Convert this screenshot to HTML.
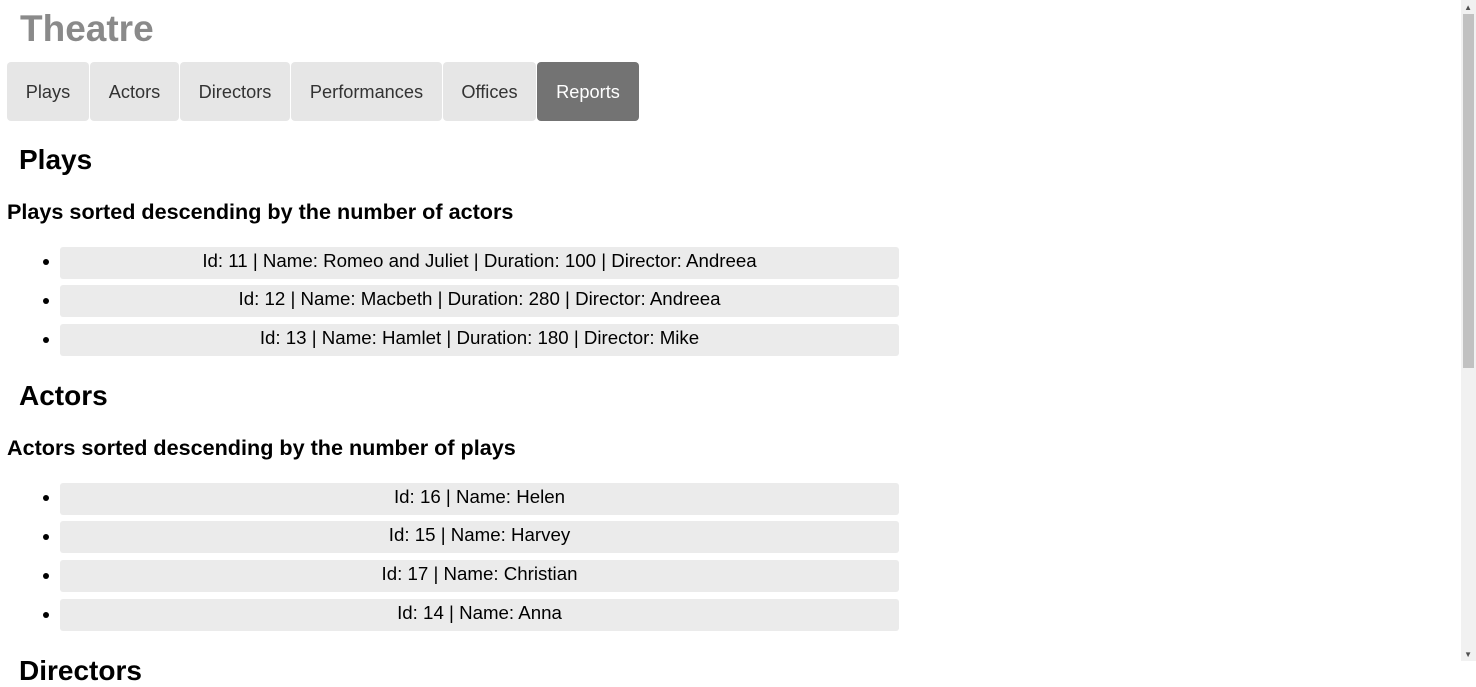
<!DOCTYPE html>
<html><head><style>
body{margin:0;width:1476px;height:661px;overflow:hidden;font-family:"Liberation Sans",Arial,sans-serif;background:#fff;position:relative}
.a{position:absolute;white-space:nowrap}
.t{left:20px;top:8px;font-size:37px;font-weight:bold;color:#8a8a8a}
.n{top:62px;height:59px;line-height:60px;background:#e6e6e6;border-radius:4px;font-size:18.2px;color:#333;text-align:center}
.r{background:#737373;color:#fff}
.h2{left:19px;font-size:28px;font-weight:bold;color:#000}
.h3{left:7px;font-size:21.6px;font-weight:bold;color:#000}
.li{left:60px;width:839px;height:32px;line-height:27px;background:#ebebeb;border-radius:3px;font-size:18.7px;text-align:center;color:#000}
.b{left:43px;width:6px;height:6px;border-radius:50%;background:#000}
.sb{right:0;top:0;width:15px;height:661px;background:#f1f1f1}
.th{right:2px;top:14px;width:11px;height:354px;background:#c1c1c1}
</style></head><body>
<div class="a t">Theatre</div>
<div class="a n" style="left:7px;width:82px">Plays</div>
<div class="a n" style="left:90px;width:89px">Actors</div>
<div class="a n" style="left:180px;width:110px">Directors</div>
<div class="a n" style="left:291px;width:151px">Performances</div>
<div class="a n" style="left:443px;width:93px">Offices</div>
<div class="a n r" style="left:537px;width:102px">Reports</div>

<div class="a h2" style="top:144px">Plays</div>
<div class="a h3" style="top:199px">Plays sorted descending by the number of actors</div>
<div class="a b" style="top:259px"></div><div class="a li" style="top:247px">Id: 11 | Name: Romeo and Juliet | Duration: 100 | Director: Andreea</div>
<div class="a b" style="top:298px"></div><div class="a li" style="top:285px">Id: 12 | Name: Macbeth | Duration: 280 | Director: Andreea</div>
<div class="a b" style="top:337px"></div><div class="a li" style="top:324px">Id: 13 | Name: Hamlet | Duration: 180 | Director: Mike</div>

<div class="a h2" style="top:380px">Actors</div>
<div class="a h3" style="top:435px">Actors sorted descending by the number of plays</div>
<div class="a b" style="top:495px"></div><div class="a li" style="top:483px">Id: 16 | Name: Helen</div>
<div class="a b" style="top:534px"></div><div class="a li" style="top:521px">Id: 15 | Name: Harvey</div>
<div class="a b" style="top:573px"></div><div class="a li" style="top:560px">Id: 17 | Name: Christian</div>
<div class="a b" style="top:612px"></div><div class="a li" style="top:599px">Id: 14 | Name: Anna</div>
<div class="a h2" style="top:655px">Directors</div>

<div class="a sb"></div><div class="a th"></div>
<div class="a" style="right:4px;top:3px;font-size:8px;color:#505050">▲</div>
<div class="a" style="right:4px;top:650px;font-size:8px;color:#505050">▼</div>
</body></html>
